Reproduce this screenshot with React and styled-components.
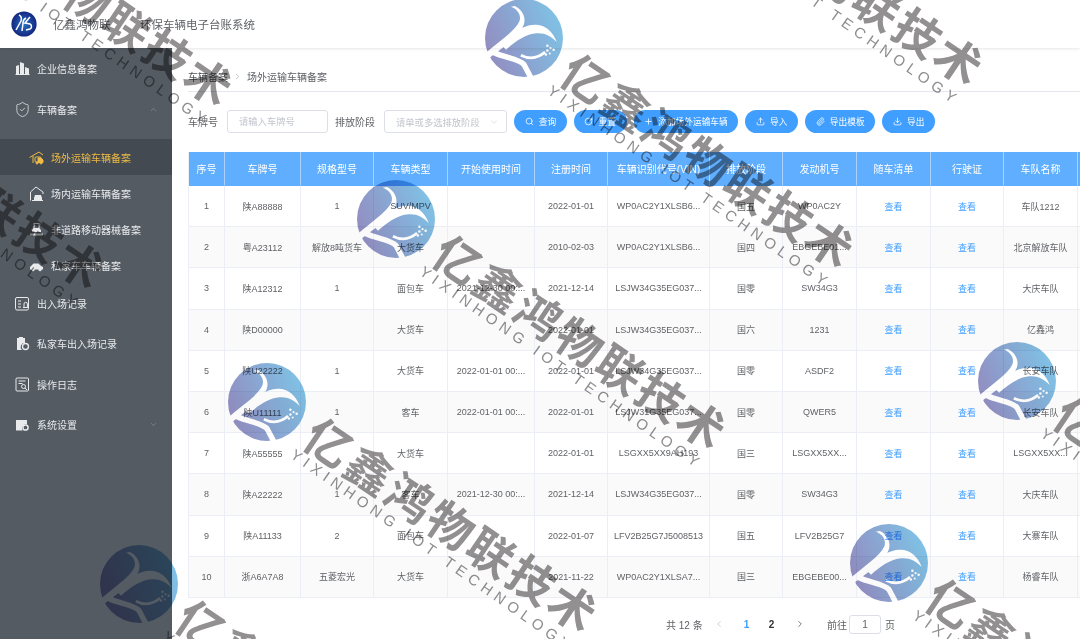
import React from "react";
import styled, { createGlobalStyle } from "styled-components";
import { ChevronDown, ChevronLeft, ChevronRight, ChevronUp, Download, Paperclip, Plus, RotateCw, Search, ShieldCheck, Upload } from "lucide-react";

const GlobalStyle = createGlobalStyle`
  html, body {
    margin: 0;
    padding: 0;
    height: 100%;
    overflow: hidden;
    background: #fff;
    font-family: "Liberation Sans", "Noto Sans CJK SC", sans-serif;
    color: #606266;
  }
  * { box-sizing: border-box; }
`;

const Page = styled.div`
  position: relative;
  width: 1080px;
  height: 639px;
  overflow: hidden;
  display: flex;
  flex-direction: column;
`;

const TopBar = styled.header`
  height: 48px;
  flex: none;
  display: flex;
  align-items: center;
  padding-left: 11px;
  font-size: 11.5px;
  color: #5f6266;
  box-shadow: 0 1px 3px rgba(0, 0, 0, 0.1);
  position: relative;
`;

const BrandName = styled.span`
  margin-left: 16px;
  width: 87px;
`;

const Body = styled.div`
  flex: 1;
  min-height: 0;
  display: flex;
`;

const Sidebar = styled.aside`
  width: 172px;
  flex: none;
  padding-top: 0.5px;
  background: #545b63;
`;

const MenuItem = styled.div`
  display: flex;
  align-items: center;
  gap: 7px;
  height: ${(p) => (p.$sub ? "36px" : "40.4px")};
  padding-left: ${(p) => (p.$sub ? "29px" : "15px")};
  padding-right: 14px;
  padding-top: ${(p) => (p.$sub ? "2px" : "0")};
  font-size: 10px;
  color: ${(p) => (p.$active ? "#eebb45" : "#e8eaec")};
  background: ${(p) => (p.$active ? "#434a52" : "transparent")};
`;

const SubMenu = styled.div`
  padding: 9.5px 0 0.5px;
`;

const Arrow = styled.span`
  margin-left: auto;
  display: flex;
  color: #868c93;
`;

const Main = styled.main`
  flex: 1;
  min-width: 0;
  overflow: hidden;
  padding: 18px 0 0 16px;
`;

const Breadcrumb = styled.nav`
  height: 26px;
  padding-bottom: 4px;
  display: flex;
  align-items: center;
  gap: 5px;
  font-size: 10px;
  color: #606266;
  border-bottom: 1px solid #e4e7ed;
`;

const Crumb = styled.span`
  color: #4f5256;
`;

const FilterBar = styled.form`
  margin-top: 18px;
  height: 23px;
  display: flex;
  align-items: center;
`;

const FilterLabel = styled.label`
  font-size: 10px;
  color: #606266;
  margin-right: 9px;
  white-space: nowrap;
`;

const TextField = styled.input`
  width: 101px;
  height: 23px;
  margin-right: 7px;
  padding: 0 11px;
  border: 1px solid #dcdfe6;
  border-radius: 3px;
  font: inherit;
  font-size: 9.3px;
  outline: none;
  &::placeholder { color: #c0c4cc; }
`;

const SelectField = styled.div`
  width: 123px;
  height: 23px;
  margin-right: 7px;
  padding: 0 7px 0 11px;
  display: flex;
  align-items: center;
  justify-content: space-between;
  border: 1px solid #dcdfe6;
  border-radius: 3px;
  font-size: 9.3px;
  color: #c0c4cc;
  white-space: nowrap;
`;

const ActionButton = styled.button`
  height: 23px;
  padding: 0 10.7px;
  margin-right: 7px;
  flex: none;
  display: flex;
  align-items: center;
  gap: 5px;
  border: 0;
  border-radius: 12px;
  background: #409eff;
  color: #fff;
  font: inherit;
  font-size: 8.7px;
`;

const Table = styled.div`
  margin-top: 19px;
  width: 900px;
  border-left: 1px solid #ebeef5;
`;

const Row = styled.div`
  display: grid;
  grid-template-columns: 36px 76px 73px 74px 87px 73px 102px 73px 74px 74px 73px 74px 12px;
  height: ${(p) => (p.$head ? "34px" : "41.2px")};
  background: ${(p) => (p.$head ? "#5faeff" : p.$even ? "#fafafa" : "#fff")};
`;

const Cell = styled.div`
  display: flex;
  align-items: center;
  justify-content: center;
  overflow: hidden;
  white-space: nowrap;
  font-size: 9px;
  color: #606266;
  border-right: 1px solid #ebeef5;
  border-bottom: 1px solid #ebeef5;
`;

const HeadCell = styled(Cell)`
  font-size: 10px;
  color: #fff;
  border-color: #a9d3fc;
  border-bottom-color: #5faeff;
`;

const ViewLink = styled.a`
  color: #409eff;
  text-decoration: none;
`;

const Pager = styled.div`
  margin-top: 17px;
  height: 19px;
  padding-left: 478px;
  display: flex;
  align-items: center;
  font-size: 10px;
  color: #606266;
`;

const PagerText = styled.span`
  white-space: nowrap;
`;

const PagerTotal = styled(PagerText)`
  width: 37px;
`;

const PageArrow = styled.span`
  width: 31px;
  display: flex;
  justify-content: center;
  color: ${(p) => (p.$off ? "#c0c4cc" : "#606266")};
`;

const PageNum = styled.span`
  width: 25px;
  text-align: center;
  font-weight: 700;
  color: ${(p) => (p.$on ? "#409eff" : "#303133")};
`;

const PageJump = styled.span`
  margin-left: 12px;
  display: flex;
  align-items: center;
`;

const PageInput = styled.input`
  width: 32px;
  height: 19px;
  margin: 0 4px 0 2px;
  padding: 0;
  text-align: center;
  border: 1px solid #dcdfe6;
  border-radius: 3px;
  font: inherit;
  color: #606266;
`;

const Watermarks = styled.div`
  position: absolute;
  inset: 0;
  pointer-events: none;
  overflow: hidden;
  mix-blend-mode: multiply;
`;

const Mark = styled.div`
  position: absolute;
  left: ${(p) => p.$x}px;
  top: ${(p) => p.$y}px;
  width: 0;
  height: 0;
`;

const MarkLogo = styled.svg`
  position: absolute;
  left: -39px;
  top: -39px;
  width: 78px;
  height: 78px;
`;

const MarkTitle = styled.div`
  position: absolute;
  left: 44px;
  top: 26px;
  height: 0;
  display: flex;
  align-items: center;
  white-space: nowrap;
  transform-origin: 0 0;
  transform: rotate(34deg);
  font-family: "Noto Sans CJK SC", sans-serif;
  font-size: 46px;
  font-weight: 700;
  letter-spacing: 3px;
  color: #929090;
`;

const MarkSub = styled.div`
  position: absolute;
  left: 26px;
  top: 50px;
  height: 0;
  display: flex;
  align-items: center;
  white-space: nowrap;
  transform-origin: 0 0;
  transform: rotate(35deg);
  font-size: 15px;
  letter-spacing: 5px;
  color: #8f8d8d;
`;

const Glyph = styled.svg`
  width: 15px;
  height: 15px;
  flex: none;
  fill: none;
  stroke: currentColor;
  stroke-width: 1;
`;

const ShieldGlyph = styled(ShieldCheck)`
  width: 17px;
  height: 17px;
  margin: 0 -1px;
  flex: none;
  stroke-width: 1.1;
`;

const BrandLogo = () => (
  <svg width="26" height="26" viewBox="0 0 26 26">
    <defs>
      <radialGradient id="brand">
        <stop offset="0" stopColor="#2a74c8" />
        <stop offset="1" stopColor="#14267f" />
      </radialGradient>
    </defs>
    <circle cx="13" cy="13" r="12.6" fill="url(#brand)" />
    <path d="M8 4c2 1 3 3 2 6L5 19M11 20l1-8c0-2 1-4 3-5M19 6l-5 6 5 1c2 1 2 4 0 5l-4 1" fill="none" stroke="#fff" strokeWidth="1.5" />
  </svg>
);

const WatermarkLogo = ({ id }) => (
  <MarkLogo viewBox="0 0 100 100">
    <defs>
      <linearGradient id={id} x1="0" y1="0.7" x2="1" y2="0.3">
        <stop offset="0" stopColor="#938cc0" />
        <stop offset="1" stopColor="#7fc3e6" />
      </linearGradient>
    </defs>
    <circle cx="50" cy="50" r="50" fill={`url(#${id})`} />
    <path d="M33 10C42 13 47 21 44 29C38 42 18 54 0 70L5 76C22 62 44 50 50 32C53 22 46 12 38 9Z" fill="#fff" />
    <path d="M20 58C35 42 52 32 66 33C78 34 87 42 92 55C84 47 76 43 66 44C52 45 38 55 27 65Z" fill="#fff" />
    <path d="M10 68C26 76 42 76 50 84L60 103" fill="none" stroke="#fff" strokeWidth="7" />
    <path d="M46 72C58 78 68 76 77 68" fill="none" stroke="#fff" strokeWidth="3.5" />
    <g fill="#fff">
      <circle cx="80" cy="60" r="1.6" />
      <circle cx="80" cy="66" r="1.6" />
      <circle cx="84" cy="63" r="1.4" />
      <circle cx="88" cy="65" r="1.6" />
      <circle cx="78" cy="71" r="1.6" />
      <circle cx="83" cy="70" r="1.3" />
    </g>
  </MarkLogo>
);

const BuildingIcon = () => (
  <Glyph viewBox="0 0 15 15">
    <path d="M1 13V5l3-1v9zM5 13V1l4 1.500V13zM10 13V6l4 1.500V13z" fill="currentColor" stroke="none" />
    <path d="M0.500 13.500h14" />
  </Glyph>
);

const TruckIcon = () => (
  <Glyph viewBox="0 0 15 15">
    <path d="M0.500 7.500L10 2l4 3M4 6v7" />
    <rect x="6" y="7" width="6" height="5" rx="1" />
    <path d="M9 8h3l2 2v2.500H9z" fill="currentColor" />
    <circle cx="8" cy="13" r="1" fill="currentColor" />
    <circle cx="12" cy="13" r="1" fill="currentColor" />
  </Glyph>
);

const GarageIcon = () => (
  <Glyph viewBox="0 0 15 15">
    <path d="M1.500 14.500V6L7 1l7 5v2" />
    <path d="M5 12l1-3h6l1 3v2H5z" fill="currentColor" stroke="none" />
    <path d="M3 14.500h11" />
  </Glyph>
);

const MachineIcon = () => (
  <Glyph viewBox="0 0 15 15">
    <rect x="5" y="1.500" width="5" height="5" />
    <path d="M3 8l2-2h5l2 2v2H3z" fill="currentColor" stroke="none" />
    <path d="M1 11.500h13v2H1z" fill="currentColor" stroke="none" />
  </Glyph>
);

const CarIcon = () => (
  <Glyph viewBox="0 0 15 15">
    <path d="M1 9l1-1 2.500-2.500h5L12 8l2 1v2.500H1z" fill="currentColor" stroke="none" />
    <circle cx="4" cy="11.500" r="1.300" fill="currentColor" />
    <circle cx="11" cy="11.500" r="1.300" fill="currentColor" />
  </Glyph>
);

const RecordIcon = () => (
  <Glyph viewBox="0 0 15 15">
    <rect x="0.500" y="1.500" width="13" height="12.500" rx="1.500" />
    <path d="M3 5h3M3 8h3M3 11h3M8 11.500h5M9 11V8a1.700 1.700 0 0 1 3.400 0v3" />
  </Glyph>
);

const ClipboardIcon = () => (
  <Glyph viewBox="0 0 15 15">
    <path d="M2 2h8v5a4 4 0 0 0-3 7H2z" fill="currentColor" stroke="none" />
    <path d="M4 1h4v2H4z" fill="currentColor" stroke="none" />
    <circle cx="10.500" cy="10.500" r="3" strokeWidth="1.400" />
  </Glyph>
);

const LogIcon = () => (
  <Glyph viewBox="0 0 15 15">
    <rect x="1" y="1" width="12.500" height="13" rx="1" />
    <path d="M3.500 4h7M3.500 6.500h4" />
    <circle cx="8.500" cy="9.500" r="2" />
    <path d="M10 11l2 2" />
  </Glyph>
);

const SettingIcon = () => (
  <Glyph viewBox="0 0 15 15">
    <path d="M1 3h11v4.500a4 4 0 0 0-4.500 6H1z" fill="currentColor" stroke="none" />
    <circle cx="10.500" cy="10.500" r="2.600" strokeWidth="1.500" />
  </Glyph>
);

const MARKS = [
  [653, -145], [524, 38], [396, 219], [267, 402], [139, 584],
  [-97, -124], [-226, 59], [1017, 381], [889, 563],
];

const COLUMNS = ["序号", "车牌号", "规格型号", "车辆类型", "开始使用时间", "注册时间", "车辆识别代号(VIN)", "排放阶段", "发动机号", "随车清单", "行驶证", "车队名称", ""];

const ROWS = [
  ["陕A88888", "1", "SUV/MPV", "", "2022-01-01", "WP0AC2Y1XLSB6...", "国五", "WP0AC2Y", "车队1212"],
  ["粤A23112", "解放8吨货车", "大货车", "", "2010-02-03", "WP0AC2Y1XLSB6...", "国四", "EBGEBE01...", "北京解放车队"],
  ["陕A12312", "1", "面包车", "2021-12-30 00:...", "2021-12-14", "LSJW34G35EG037...", "国零", "SW34G3", "大庆车队"],
  ["陕D00000", "", "大货车", "", "2022-01-01", "LSJW34G35EG037...", "国六", "1231", "亿鑫鸿"],
  ["陕U22222", "1", "大货车", "2022-01-01 00:...", "2022-01-01", "LSJW34G35EG037...", "国零", "ASDF2", "长安车队"],
  ["陕U11111", "1", "客车", "2022-01-01 00:...", "2022-01-01", "LSJW31G35EG037...", "国零", "QWER5", "长安车队"],
  ["陕A55555", "", "大货车", "", "2022-01-01", "LSGXX5XX9AH193", "国三", "LSGXX5XX...", "LSGXX5XX..."],
  ["陕A22222", "1", "客车", "2021-12-30 00:...", "2021-12-14", "LSJW34G35EG037...", "国零", "SW34G3", "大庆车队"],
  ["陕A11133", "2", "面包车", "", "2022-01-07", "LFV2B25G7J5008513", "国五", "LFV2B25G7", "大寨车队"],
  ["浙A6A7A8", "五菱宏光", "大货车", "", "2021-11-22", "WP0AC2Y1XLSA7...", "国三", "EBGEBE00...", "杨睿车队"],
];

const BUTTONS = [
  [Search, "查询"],
  [RotateCw, "重置"],
  [Plus, "添加场外运输车辆"],
  [Upload, "导入"],
  [Paperclip, "导出模板"],
  [Download, "导出"],
];

export default function App() {
  return (
    <Page>
      <GlobalStyle />
      <TopBar>
        <BrandLogo />
        <BrandName>亿鑫鸿物联</BrandName>
        <span>环保车辆电子台账系统</span>
      </TopBar>
      <Body>
        <Sidebar>
          <MenuItem><BuildingIcon />企业信息备案</MenuItem>
          <MenuItem>
            <ShieldGlyph />
            车辆备案
            <Arrow><ChevronUp size={9} /></Arrow>
          </MenuItem>
          <SubMenu>
            <MenuItem $sub $active><TruckIcon />场外运输车辆备案</MenuItem>
            <MenuItem $sub><GarageIcon />场内运输车辆备案</MenuItem>
            <MenuItem $sub><MachineIcon />非道路移动器械备案</MenuItem>
            <MenuItem $sub><CarIcon />私家车车辆备案</MenuItem>
          </SubMenu>
          <MenuItem><RecordIcon />出入场记录</MenuItem>
          <MenuItem><ClipboardIcon />私家车出入场记录</MenuItem>
          <MenuItem><LogIcon />操作日志</MenuItem>
          <MenuItem>
            <SettingIcon />
            系统设置
            <Arrow><ChevronDown size={9} /></Arrow>
          </MenuItem>
        </Sidebar>
        <Main>
          <Breadcrumb>
            <Crumb>车辆备案</Crumb>
            <ChevronRight size={9} color="#b0b3b8" />
            <span>场外运输车辆备案</span>
          </Breadcrumb>
          <FilterBar>
            <FilterLabel>车牌号</FilterLabel>
            <TextField placeholder="请输入车牌号" />
            <FilterLabel>排放阶段</FilterLabel>
            <SelectField>
              请单或多选排放阶段
              <ChevronDown size={10} strokeWidth={1.2} />
            </SelectField>
            {BUTTONS.map(([Icon, label]) => (
              <ActionButton type="button" key={label}>
                <Icon size={9} />
                {label}
              </ActionButton>
            ))}
          </FilterBar>
          <Table>
            <Row $head>
              {COLUMNS.map((name, i) => <HeadCell key={i}>{name}</HeadCell>)}
            </Row>
            {ROWS.map((row, i) => (
              <Row key={i} $even={i % 2 === 1}>
                <Cell>{i + 1}</Cell>
                {row.slice(0, 8).map((value, j) => <Cell key={j}>{value}</Cell>)}
                <Cell><ViewLink>查看</ViewLink></Cell>
                <Cell><ViewLink>查看</ViewLink></Cell>
                <Cell>{row[8]}</Cell>
                <Cell />
              </Row>
            ))}
          </Table>
          <Pager>
            <PagerTotal>共 12 条</PagerTotal>
            <PageArrow $off><ChevronLeft size={10} /></PageArrow>
            <PageNum $on>1</PageNum>
            <PageNum>2</PageNum>
            <PageArrow><ChevronRight size={10} /></PageArrow>
            <PageJump>
              <PagerText>前往</PagerText>
              <PageInput defaultValue="1" />
              <PagerText>页</PagerText>
            </PageJump>
          </Pager>
        </Main>
      </Body>
      <Watermarks>
        {MARKS.map(([x, y], i) => (
          <Mark key={i} $x={x} $y={y}>
            <WatermarkLogo id={`mark${i}`} />
            <MarkTitle>亿鑫鸿物联技术</MarkTitle>
            <MarkSub>YIXINHONG IOT TECHNOLOGY</MarkSub>
          </Mark>
        ))}
      </Watermarks>
    </Page>
  );
}
